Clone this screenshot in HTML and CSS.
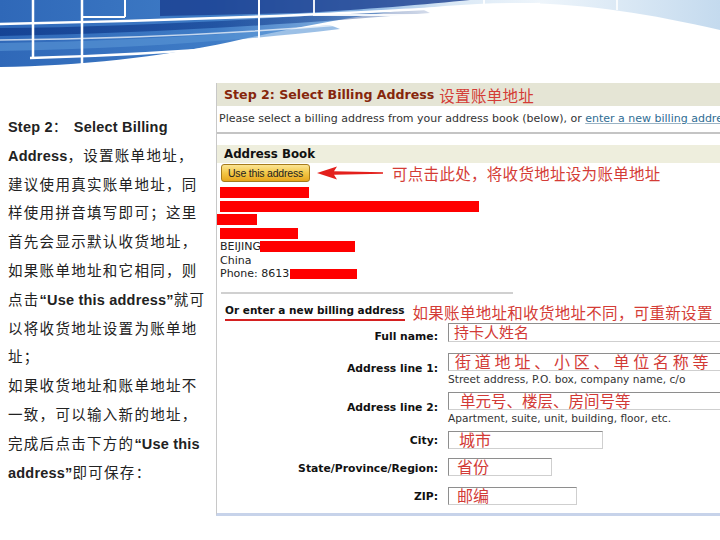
FILE: index.html
```html
<!DOCTYPE html>
<html lang="zh-CN">
<head>
<meta charset="utf-8">
<title>Step 2 Select Billing Address</title>
<link rel="stylesheet" href="styles.css">
</head>
<body>
<header class="banner">
<svg width="720" height="83" viewBox="0 0 720 83" xmlns="http://www.w3.org/2000/svg">
  <defs>
    <linearGradient id="band" x1="0" y1="0" x2="720" y2="0" gradientUnits="userSpaceOnUse">
      <stop offset="0" stop-color="#2f68b8"/>
      <stop offset="0.3" stop-color="#3f7cc6"/>
      <stop offset="0.5" stop-color="#8ab5e2"/>
      <stop offset="0.62" stop-color="#d8e7f5"/>
      <stop offset="0.75" stop-color="#eef5fb"/>
      <stop offset="1" stop-color="#c4daee"/>
    </linearGradient>
    <linearGradient id="navy" x1="0" y1="0" x2="720" y2="0" gradientUnits="userSpaceOnUse">
      <stop offset="0" stop-color="#0f3a8c" stop-opacity="0.8"/>
      <stop offset="0.45" stop-color="#0f3a8c" stop-opacity="0.5"/>
      <stop offset="0.68" stop-color="#0f3a8c" stop-opacity="0"/>
    </linearGradient>
  </defs>
  <path d="M0 0H720V30C650 14 590 4 520 3C420 3 330 20 230 42C160 57 80 66 0 67Z" fill="url(#band)"/>
  <path d="M160 0H470C430 4 360 10 300 13L160 16Z" fill="#1a3f90" opacity="0.8"/>
  <path d="M0 28C120 27 260 20 420 8L430 13C270 26 130 34 0 36Z" fill="url(#navy)"/>
  <path d="M0 43C120 41 230 35 330 25L340 29C240 41 120 49 0 51Z" fill="#5a96d6" opacity="0.6"/>
  <g fill="none" stroke="#ffffff" stroke-linecap="butt">
    <path d="M0 24C100 22 200 19 300 15C380 12 460 6 540 4" stroke-width="2.5"/>
    <path d="M0 40C120 39 240 33 340 25" stroke-width="1.5" opacity="0.7"/>
    <path d="M30 58C110 56 190 51 250 46" stroke-width="2.5"/>
    <path d="M33 0V58" stroke-width="2.5"/>
    <path d="M82 0V66" stroke-width="2.5"/>
    <path d="M125 0V17M82 17H125" stroke-width="2"/>
    <path d="M259 0V42" stroke-width="2"/>
    <path d="M314 0V15H484V0" stroke-width="2" opacity="0.9"/>
    <path d="M617 0V10" stroke-width="2" opacity="0.8"/>
  </g>
</svg>
</header>
<main class="content">
  <section class="intro">
    <p><b>Step 2</b>： <b>Select Billing</b><br>
    <b>Address</b>，设置账单地址，<br>
    建议使用真实账单地址，同<br>
    样使用拼音填写即可；这里<br>
    首先会显示默认收货地址，<br>
    如果账单地址和它相同，则<br>
    点击<b>“Use this address”</b>就可<br>
    以将收货地址设置为账单地<br>
    址；<br>
    如果收货地址和账单地址不<br>
    一致，可以输入新的地址，<br>
    完成后点击下方的<b>“Use this</b><br>
    <b>address”</b>即可保存：</p>
  </section>
  <section class="shot">
    <div class="step-title"><b>Step 2: Select Billing Address</b><span class="note">设置账单地址</span></div>
    <div class="instr">Please select a billing address from your address book (below), or <a href="#">enter a new billing address</a></div>
    <div class="rule"></div>
    <div class="book-bar">Address Book</div>
    <div class="use-row">
      <span class="btn">Use this address</span>
      <svg class="arrow" width="66" height="14" viewBox="0 0 66 14" xmlns="http://www.w3.org/2000/svg"><path d="M0 7L20 0.5L17 5.2L66 6.3V7.7L17 8.8L20 13.5Z" fill="#e3201c"/></svg>
      <span class="note">可点击此处，将收货地址设为账单地址</span>
    </div>
    <div class="addr">
      <div class="ln"><i class="mask m1"></i></div>
      <div class="ln"><i class="mask m2"></i></div>
      <div class="ln"><i class="mask m3"></i></div>
      <div class="ln"><i class="mask m4"></i></div>
      <div class="ln"><span>BEIJING</span><i class="mask m5"></i></div>
      <div class="ln"><span>China</span></div>
      <div class="ln"><span>Phone: 8613</span><i class="mask m6"></i></div>
    </div>
    <div class="rule short"></div>
    <div class="new-head"><span class="ul">Or enter a new billing address</span><span class="note">如果账单地址和收货地址不同，可重新设置</span></div>
    <div class="form">
      <div class="row">
        <label class="lbl lbl-name">Full name:</label>
        <div class="fld"><div class="inp wide tall">持卡人姓名</div></div>
      </div>
      <div class="row">
        <label class="lbl lbl-addr">Address line 1:</label>
        <div class="fld"><div class="inp wide big">街道地址、小区、单位名称等</div><div class="hint">Street address, P.O. box, company name, c/o</div></div>
      </div>
      <div class="row">
        <label class="lbl lbl-addr">Address line 2:</label>
        <div class="fld"><div class="inp wide mid">单元号、楼层、房间号等</div><div class="hint">Apartment, suite, unit, building, floor, etc.</div></div>
      </div>
      <div class="row">
        <label class="lbl">City:</label>
        <div class="fld"><div class="inp city">城市</div></div>
      </div>
      <div class="row push1">
        <label class="lbl">State/Province/Region:</label>
        <div class="fld"><div class="inp state">省份</div></div>
      </div>
      <div class="row push2">
        <label class="lbl">ZIP:</label>
        <div class="fld"><div class="inp zip">邮编</div></div>
      </div>
      <div class="stub push2"></div>
    </div>
  </section>
</main>
</body>
</html>
```
FILE: styles.css
```css
* { box-sizing: border-box; margin: 0; padding: 0; }
html, body { width: 720px; height: 540px; overflow: hidden; background: #fff; }
body { font-family: "DejaVu Sans", "Noto Sans CJK SC", sans-serif; color: #222; }

.banner { height: 83px; }
.banner svg { display: block; }

.content { display: flex; align-items: flex-start; }

.intro {
  width: 216px;
  flex: none;
  padding: 30px 0 0 8px;
  font-family: "Liberation Sans", "Noto Sans CJK SC", sans-serif;
  font-size: 14.5px;
  line-height: 28.8px;
  letter-spacing: 1.3px;
  color: #222;
  white-space: nowrap;
}
.intro b { font-weight: bold; letter-spacing: 0.2px; }

.shot {
  flex: 1;
  height: 433px;
  border-left: 1px solid #c8c8c8;
  border-bottom: 3px solid #c7d3ea;
  overflow: hidden;
}

.note {
  font-family: "Noto Sans CJK SC", sans-serif;
  font-size: 15.5px;
  letter-spacing: 0.3px;
  color: #d43c36;
  white-space: nowrap;
}

.step-title {
  height: 23px;
  background: #e5e5d5;
  display: flex;
  align-items: center;
  gap: 5px;
  padding-left: 7px;
  white-space: nowrap;
}
.step-title b { font: bold 12.6px "DejaVu Sans", sans-serif; color: #86260c; }

.instr {
  margin-top: 6px;
  padding-left: 2px;
  font-size: 11px;
  line-height: 14px;
  color: #333;
  white-space: nowrap;
}
.instr a { color: #2f6d94; text-decoration: underline; text-decoration-color: #9ab3c4; }

.rule { height: 2px; background: #c4c4c4; margin-top: 6px; }
.rule.short { width: 292px; height: 2px; background: #d0d0d0; margin: 11px 0 0 4px; }

.book-bar {
  margin-top: 11px;
  height: 18px;
  background: #eeeedd;
  padding-left: 7px;
  font: bold 11.8px/18px "DejaVu Sans", sans-serif;
  color: #111;
}

.use-row {
  display: flex;
  align-items: center;
  height: 18px;
  margin-top: 1px;
  padding-left: 4px;
}
.btn {
  width: 89px;
  height: 18px;
  flex: none;
  border: 1px solid #a57b1c;
  border-radius: 3px;
  background: linear-gradient(#fbe594, #f3c746 50%, #e6a61e);
  font: 10.5px/16px "Liberation Sans", sans-serif;
  letter-spacing: -0.2px;
  text-align: center;
  color: #222;
}
.arrow { display: block; margin-left: 7px; flex: none; }
.use-row .note { margin-left: 9px; }

.addr {
  margin-top: 4px;
  padding-left: 3px;
  font-size: 11px;
  color: #222;
}
.ln { display: flex; align-items: center; height: 13.5px; line-height: 13.5px; white-space: nowrap; }
.mask { display: block; height: 11px; background: #ff0000; flex: none; }
.m1 { width: 89px; }
.m2 { width: 259px; }
.m3 { width: 40px; margin-left: -3px; }
.m4 { width: 78px; }
.m5 { width: 95px; margin-left: -1px; }
.m6 { width: 67px; height: 10px; margin-left: 1px; }

.new-head {
  display: flex;
  align-items: center;
  gap: 8px;
  height: 20px;
  margin-top: 8px;
  margin-bottom: 1px;
  padding-left: 8px;
}
.ul {
  font: bold 10.5px/14px "DejaVu Sans", sans-serif;
  color: #111;
  border-bottom: 2px solid #d42020;
  padding-bottom: 2px;
  white-space: nowrap;
}

.form { display: flex; flex-direction: column; gap: 7px; }
.row { display: flex; align-items: flex-start; }
.push1 { margin-top: 1px; }
.push2 { margin-top: 2px; }
.lbl {
  width: 231px;
  flex: none;
  padding: 1.5px 10px 0 0;
  text-align: right;
  font: bold 10.8px/18px "DejaVu Sans", sans-serif;
  color: #111;
  white-space: nowrap;
}
.lbl-name { padding-top: 5px; }
.lbl-addr { padding-top: 7.5px; }
.fld { display: flex; flex-direction: column; }
.inp {
  height: 18px;
  border: 1px solid #cfcfcf;
  border-top-color: #8e8e8e;
  border-left-color: #8e8e8e;
  background: #fff;
  padding: 0 0 0 8px;
  font-family: "Noto Sans CJK SC", sans-serif;
  font-size: 16px;
  line-height: 15px;
  color: #d23a36;
  white-space: nowrap;
}
.inp.wide { width: 272px; border-right: 0; }
.inp.tall { height: 19px; font-size: 15px; line-height: 16px; padding-left: 5px; }
.inp.big { font-size: 16px; letter-spacing: 3.8px; padding-left: 6px; line-height: 14px; }
.inp.mid { font-size: 15.5px; letter-spacing: 0; padding-left: 11px; line-height: 14px; }
.inp.city { width: 155px; padding-left: 10px; }
.inp.state { width: 104px; }
.inp.zip { width: 129px; }
.hint {
  margin-top: 2px;
  font-size: 10.6px;
  line-height: 12px;
  color: #333;
  white-space: nowrap;
}
.stub { margin-left: 231px; width: 252px; height: 2px; background: #bdbdbd; }
```
